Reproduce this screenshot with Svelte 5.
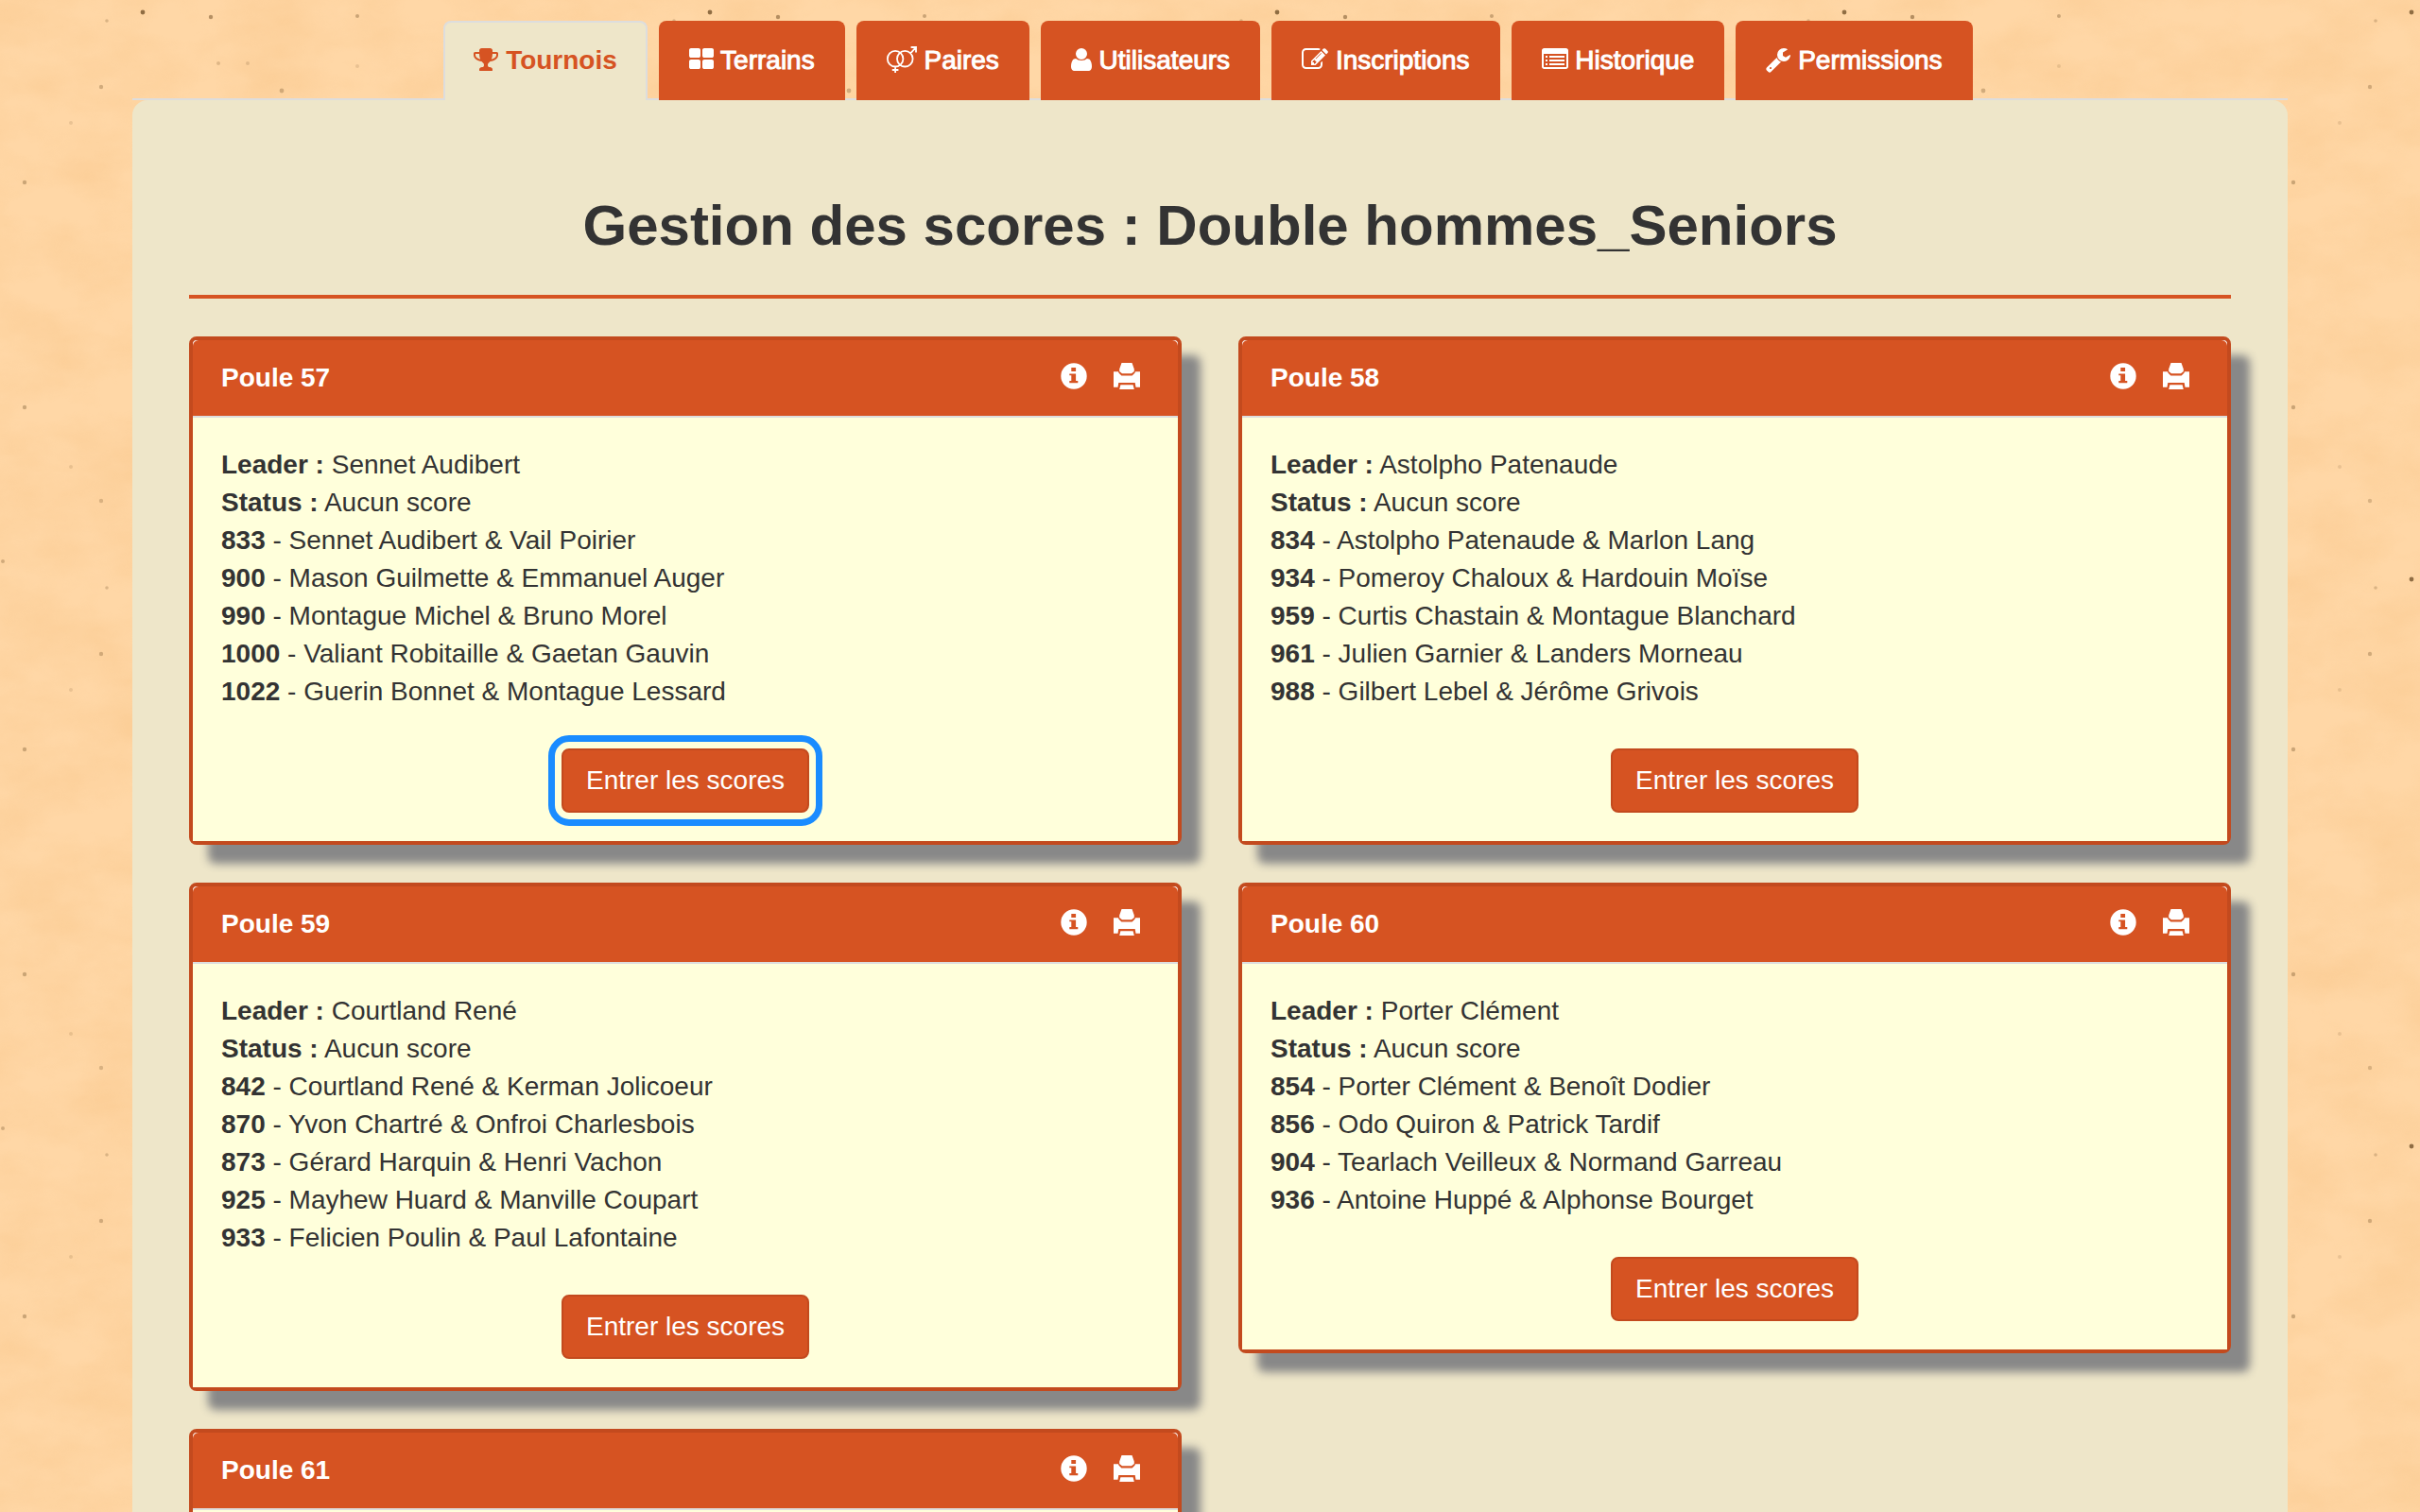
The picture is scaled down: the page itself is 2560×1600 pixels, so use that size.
<script>
  const icons = {
    trophy: {
      box: '64 0 1664 1792',
      size: 'w26',
      d: 'M522 883q-74-162-74-371h-256v96q0 78 94.5 162t235.5 113zm1078-275v-96h-256q0 209-74 371 141-29 235.5-113t94.5-162zm128-128v128q0 71-41.5 143t-112 130-173 97.5-215.5 44.5q-42 54-95 95-38 34-52.5 72.5t-14.5 89.5q0 54 30.5 91t97.5 37q75 0 133.5 45.5t58.5 114.5v64q0 14-9 23t-23 9h-832q-14 0-23-9t-9-23v-64q0-69 58.5-114.5t133.5-45.5q67 0 97.5-37t30.5-91q0-51-14.5-89.5t-52.5-72.5q-53-41-95-95-113-5-215.5-44.5t-173-97.5-112-130-41.5-143v-128q0-40 28-68t68-28h288v-96q0-66 47-113t113-47h576q66 0 113 47t47 113v96h288q40 0 68 28t28 68z'
    },
    grid: {
      box: '64 0 1664 1792',
      size: 'w26',
      d: 'M832 1024v384q0 52-38 90t-90 38h-512q-52 0-90-38t-38-90v-384q0-52 38-90t90-38h512q52 0 90 38t38 90zm0-768v384q0 52-38 90t-90 38h-512q-52 0-90-38t-38-90v-384q0-52 38-90t90-38h512q52 0 90 38t38 90zm896 768v384q0 52-38 90t-90 38h-512q-52 0-90-38t-38-90v-384q0-52 38-90t90-38h512q52 0 90 38t38 90zm0-768v384q0 52-38 90t-90 38h-512q-52 0-90-38t-38-90v-384q0-52 38-90t90-38h512q52 0 90 38t38 90z'
    },
    pair: { box: '0 0 32 28', size: 'w32', stroke: true, d: 'M17.4 13.2a8.3 8.3 0 1 1-16.6 0a8.3 8.3 0 1 1 16.6 0zM27.6 13.2a8.3 8.3 0 1 1-16.6 0a8.3 8.3 0 1 1 16.6 0zM9.1 21.5V28M5.8 25h6.6M25.2 7.4L31 1.2M25.6 1H31v5.6' },
    user: {
      box: '192 0 1408 1792',
      size: 'w22',
      d: 'M1600 1399q0 109-62.5 187t-150.5 78h-982q-88 0-150.5-78t-62.5-187q0-85 8.5-160.5t31.5-152 58.5-131 94-89 134.5-34.5q131 128 377 128t377-128q76 0 134.5 34.5t94 89 58.5 131 31.5 152 8.5 160.5zm-320-887q0 159-112.5 271.5t-271.5 112.5-271.5-112.5-112.5-271.5 112.5-271.5 271.5-112.5 271.5 112.5 112.5 271.5z'
    },
    edit: {
      box: '0 0 1792 1792',
      size: 'w28',
      d: 'M888 1184l116-116-152-152-116 116v56h96v96h56zm440-720q-16-16-33 1l-350 350q-17 17-1 33t33-1l350-350q17-17 1-33zm80 594v190q0 119-84.5 203.5t-203.5 84.5h-832q-119 0-203.5-84.5t-84.5-203.5v-832q0-119 84.5-203.5t203.5-84.5h832q63 0 117 25 15 7 18 23 3 17-9 29l-49 49q-14 14-32 8-23-6-45-6h-832q-66 0-113 47t-47 113v832q0 66 47 113t113 47h832q66 0 113-47t47-113v-126q0-13 9-22l64-64q15-15 35-7t20 29zm-96-738l288 288-672 672h-288v-288zm444 132l-92 92-288-288 92-92q28-28 68-28t68 28l152 152q28 28 28 68t-28 68z'
    },
    list: {
      box: '0 0 1792 1792',
      size: 'w28',
      d: 'M160 128h1472q66 0 113 47t47 113v1088q0 66-47 113t-113 47h-1472q-66 0-113-47t-47-113v-1088q0-66 47-113t113-47zM128 512v864q0 32 32 32h1472q32 0 32-32v-864zM256 640h128v128h-128zM512 640h1024v128h-1024zM256 896h128v128h-128zM512 896h1024v128h-1024zM256 1152h128v128h-128zM512 1152h1024v128h-1024z'
    },
    wrench: {
      box: '64 0 1664 1792',
      size: 'w26',
      d: 'M448 1472q0-26-19-45t-45-19-45 19-19 45 19 45 45 19 45-19 19-45zm644-420l-682 682q-37 37-90 37-52 0-91-37l-106-108q-38-36-38-90 0-53 38-91l681-681q39 98 114.5 173.5t173.5 114.5zm634-435q0 39-23 106-47 134-164.5 217.5t-258.5 83.5q-185 0-316.5-131.5t-131.5-316.5 131.5-316.5 316.5-131.5q58 0 121.5 16.5t107.5 46.5q16 11 16 28t-16 28l-293 169v224l193 107q5-3 79-48.5t135.5-81 70.5-35.5q15 0 23.5 10t8.5 25z'
    }
  };

  const tabs = [
    { label: 'Tournois', icon: icons.trophy, active: true },
    { label: 'Terrains', icon: icons.grid },
    { label: 'Paires', icon: icons.pair },
    { label: 'Utilisateurs', icon: icons.user },
    { label: 'Inscriptions', icon: icons.edit },
    { label: 'Historique', icon: icons.list },
    { label: 'Permissions', icon: icons.wrench }
  ];

  const pools = [
    {
      id: 57, leader: 'Sennet Audibert', focused: true,
      pairs: [[833, 'Sennet Audibert & Vail Poirier'], [900, 'Mason Guilmette & Emmanuel Auger'], [990, 'Montague Michel & Bruno Morel'], [1000, 'Valiant Robitaille & Gaetan Gauvin'], [1022, 'Guerin Bonnet & Montague Lessard']]
    },
    {
      id: 58, leader: 'Astolpho Patenaude',
      pairs: [[834, 'Astolpho Patenaude & Marlon Lang'], [934, 'Pomeroy Chaloux & Hardouin Moïse'], [959, 'Curtis Chastain & Montague Blanchard'], [961, 'Julien Garnier & Landers Morneau'], [988, 'Gilbert Lebel & Jérôme Grivois']]
    },
    {
      id: 59, leader: 'Courtland René',
      pairs: [[842, 'Courtland René & Kerman Jolicoeur'], [870, 'Yvon Chartré & Onfroi Charlesbois'], [873, 'Gérard Harquin & Henri Vachon'], [925, 'Mayhew Huard & Manville Coupart'], [933, 'Felicien Poulin & Paul Lafontaine']]
    },
    {
      id: 60, leader: 'Porter Clément',
      pairs: [[854, 'Porter Clément & Benoît Dodier'], [856, 'Odo Quiron & Patrick Tardif'], [904, 'Tearlach Veilleux & Normand Garreau'], [936, 'Antoine Huppé & Alphonse Bourget']]
    },
    { id: 61, leader: '', pairs: [] }
  ];

  // x, y, radius, opacity of the specks in one 600px paper tile
  const specks = [
    [151, 13, 2.4, 0.75], [223, 18, 2.2, 0.5], [378, 17, 2, 0.35], [113, 22, 1.8, 0.25],
    [231, 67, 2, 0.22], [262, 67, 2, 0.18], [378, 70, 2, 0.15], [107, 92, 2.2, 0.3],
    [298, 96, 2.4, 0.3], [75, 130, 2, 0.15], [26, 193, 2.2, 0.35], [26, 431, 2.2, 0.35],
    [75, 494, 2, 0.15], [107, 530, 2.2, 0.25], [3, 594, 2, 0.3], [500, 250, 2, 0.2], [540, 420, 2, 0.2]
  ];
</script>

<div class="page">
  <svg class="paper" aria-hidden="true">
    <defs>
      <filter id="grain" x="0" y="0" width="100%" height="100%" color-interpolation-filters="sRGB">
        <feTurbulence type="fractalNoise" baseFrequency="0.012 0.02" numOctaves="5" seed="4" />
        <feColorMatrix type="matrix" values="0 0 0 0 0.95  0 0 0 0 0.71  0 0 0 0 0.43  1.6 0 0 0 -0.5" />
      </filter>
      <pattern id="specks" width="600" height="600" patternUnits="userSpaceOnUse">
        {#each specks as [x, y, r, o]}
          <ellipse cx={x} cy={y} rx={r} ry={r} fill="#6b4a22" opacity={o} />
        {/each}
      </pattern>
    </defs>
    <rect class="grain" width="100%" height="100%" filter="url(#grain)" />
    <rect width="100%" height="100%" fill="url(#specks)" />
  </svg>

  <div class="container">
    <nav class="tabs">
      {#each tabs as tab}
        <a href="#{tab.label}" class="tab" class:active={tab.active}>
          <svg class="icon {tab.icon.size}" class:line={tab.icon.stroke} viewBox={tab.icon.box} aria-hidden="true">
            <path d={tab.icon.d} fill-rule="evenodd" />
          </svg>
          {tab.label}
        </a>
      {/each}
    </nav>

    <main class="content">
      <h1>Gestion des scores : Double hommes_Seniors</h1>
      <div class="pools">
        {#each pools as pool}
          <section class="pool">
            <header>
              <h2>Poule {pool.id}</h2>
              <div class="actions">
                <button type="button" aria-label="Informations">
                  <svg viewBox="0 0 28 28" aria-hidden="true">
                    <path fill-rule="evenodd" d="M14 .3a13.7 13.7 0 1 1 0 27.4a13.7 13.7 0 1 1 0-27.4zM11.3 5v4h4.8V5zM9.3 11.4v1.9h2V19h-2v2.2h9V19h-2.2v-7.600z" />
                  </svg>
                </button>
                <button type="button" aria-label="Imprimer">
                  <svg viewBox="0 0 28 28" aria-hidden="true">
                    <path d="M8.500 0h11l2.300 6.500v2.500l-2.800 2.300H9L6.200 9V6.500zM0 9.300h5l.6 1.500 2.800 2.800h11.200l2.800-2.800.6-1.500h5v16.400h-4.500l-.8-4.800H5.300l-.8 4.800H0zM7.400 23.300h13.200l1.200 4.700H6.200z" />
                  </svg>
                </button>
              </div>
            </header>
            <div class="body">
              {#if pool.leader}
                <p><b>Leader :</b> {pool.leader}</p>
                <p><b>Status :</b> Aucun score</p>
              {/if}
              {#each pool.pairs as [number, names]}
                <p><b>{number}</b> - {names}</p>
              {/each}
              {#if pool.leader}
                <button type="button" class="enter" class:focused={pool.focused}>Entrer les scores</button>
              {/if}
            </div>
          </section>
        {/each}
      </div>
    </main>
  </div>
</div>

<style>
  :global(body) {
    background: #ffd7a6;
  }

  .page {
    position: relative;
    display: flex;
    flex-direction: column;
    height: 100vh;
    overflow: hidden;
    color: #333;
    font-family: 'Liberation Sans', Arial, sans-serif;
    font-size: 28px;
    line-height: 40px;
  }

  .paper {
    position: absolute;
    inset: 0;
    width: 100%;
    height: 100%;
  }

  .grain {
    opacity: 0.25;
  }

  .container {
    position: relative;
    width: 100%;
    max-width: 2280px;
    margin: 0 auto;
    padding-top: 22px;
  }

  .tabs {
    display: flex;
    justify-content: center;
    gap: 12px;
    padding-right: 4px;
    border-bottom: 2px solid #ddd;
  }

  .tab {
    margin-bottom: -2px;
    padding: 20px 30px 22px;
    border: 2px solid #d65322;
    border-bottom: 0;
    border-radius: 8px 8px 0 0;
    background: #d65322;
    color: #fff;
    text-decoration: none;
    white-space: nowrap;
    -webkit-text-stroke: 1px currentColor;
  }

  .tab.active {
    border-color: #ddd;
    background: #eee6c9;
    color: #d65322;
    font-weight: bold;
    -webkit-text-stroke: 0;
  }

  .icon {
    height: 28px;
    vertical-align: -4px;
    fill: currentColor;
    overflow: visible;
  }

  .icon.line {
    fill: none;
    stroke: currentColor;
    stroke-width: 1.8;
  }

  .w22 { width: 22px; }
  .w26 { width: 26px; }
  .w28 { width: 28px; }
  .w32 { width: 32px; }

  .content {
    padding: 100px 60px 60px;
    border-radius: 16px;
    background: #eee6c9;
  }

  h1 {
    margin: 0 0 40px;
    padding-bottom: 40px;
    border-bottom: 4px solid #d65322;
    font-size: 60px;
    line-height: 66px;
    text-align: center;
  }

  .pools {
    display: grid;
    grid-template-columns: 1fr 1fr;
    align-items: start;
    gap: 40px 60px;
  }

  .pool {
    border: 4px solid #c34a1e;
    border-radius: 8px;
    background: #fff;
    box-shadow: 20px 20px 10px #888;
  }

  .pool header {
    display: flex;
    align-items: center;
    justify-content: space-between;
    padding: 20px 40px 20px 30px;
    border-bottom: 2px solid #ddd;
    border-radius: 6px 6px 0 0;
    background: #d65322;
    color: #fff;
  }

  h2 {
    margin: 0;
    font-size: 28px;
    line-height: 40px;
  }

  .actions {
    display: flex;
    gap: 28px;
    padding-bottom: 4px;
  }

  .actions button {
    width: 28px;
    height: 28px;
    padding: 0;
    border: 0;
    background: none;
    color: inherit;
  }

  .actions svg {
    display: block;
    width: 28px;
    height: 28px;
    fill: currentColor;
  }

  .body {
    padding: 30px;
    background: #ffffdb;
  }

  p {
    margin: 0;
  }

  .enter {
    display: block;
    margin: 40px auto 0;
    padding: 12px 24px;
    border: 2px solid #c34a1e;
    border-radius: 8px;
    background: #d65322;
    color: #fff;
    font: inherit;
  }

  .enter.focused {
    outline: 7px solid #1a8cff;
    outline-offset: 7px;
  }
</style>
